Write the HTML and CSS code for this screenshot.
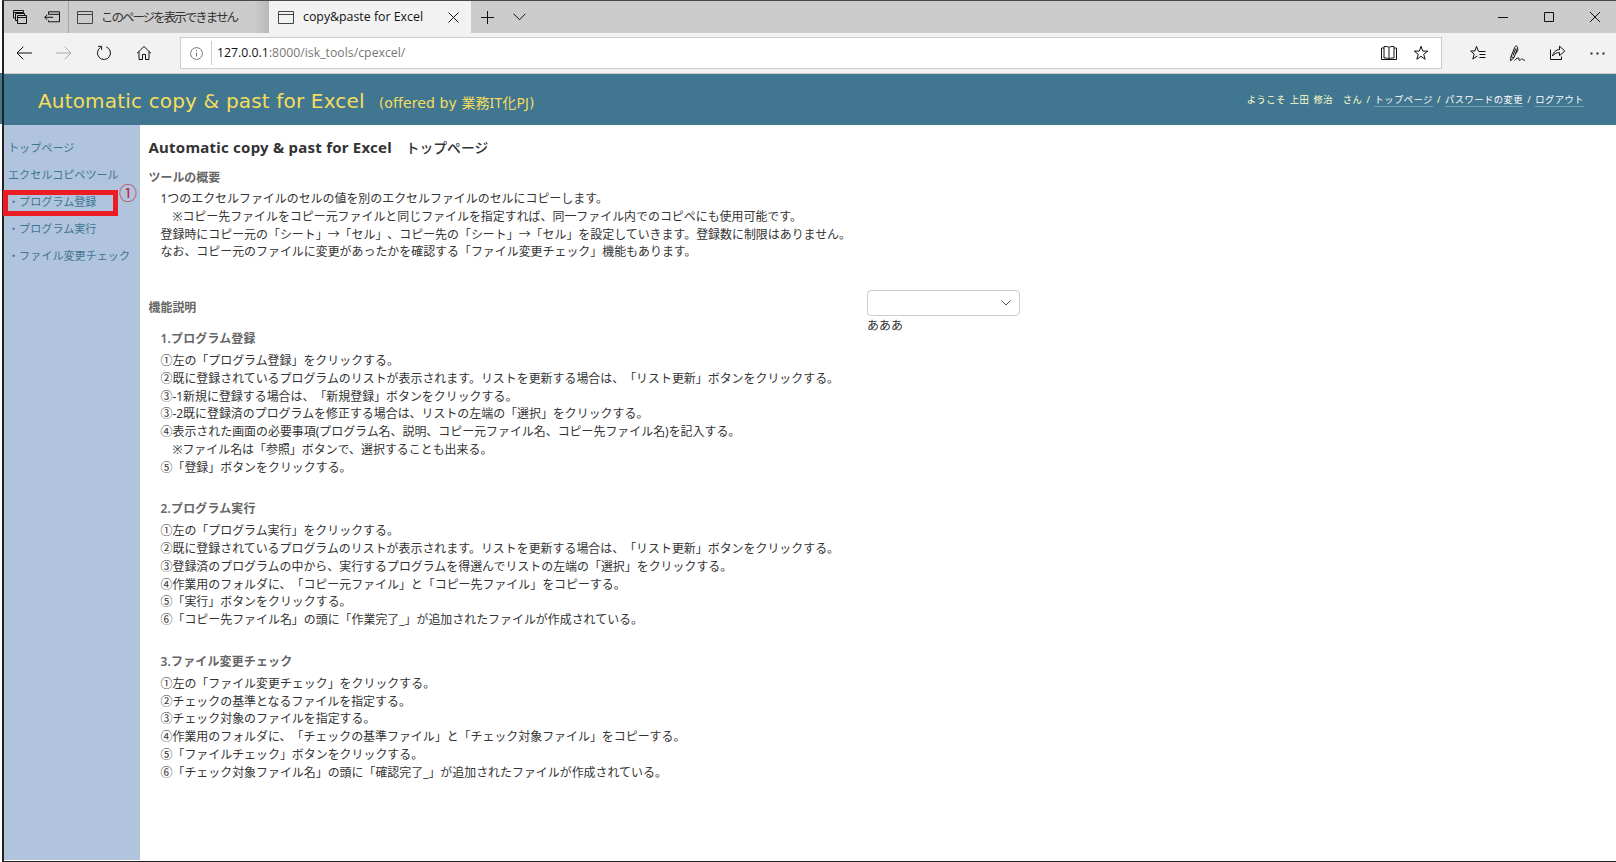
FILE: index.html
```
<!DOCTYPE html>
<html lang="ja">
<head>
<meta charset="utf-8">
<title>copy&amp;paste for Excel</title>
<link rel="stylesheet" href="styles.css">
</head>
<body>
<div class="desktop">
<div class="window">
  <div class="tabbar">
    <div class="tabtools">
      <svg width="14" height="14" viewBox="0 0 14 14"><path d="M10.500 2.500V.5H.5v7.500h2M.5 2.500h10M4.500 13.500V5.500h9v8zM4.500 7.500h9M2.500 10.500V3.500h9v2M2.500 10.500h2" /></svg>
      <svg width="16" height="12" viewBox="0 0 16 12"><path d="M4.500 3.500V.8h11v10h-11V9.300M4.500 3.300h11M.7 6.300h8.500M3.300 3.800L.7 6.300l2.600 2.500" /></svg>
    </div>
    <div class="tab tab-idle">
      <svg class="page" width="16" height="13" viewBox="0 0 16 13"><path d="M.5.5h15v12H.5zM.5 3.500h15"/></svg>
      <span class="idle-title">このページを表示できません</span>
    </div>
    <div class="tab tab-active">
      <svg class="page" width="16" height="13" viewBox="0 0 16 13"><path d="M.5.5h15v12H.5zM.5 3.500h15"/></svg>
      <span class="active-title">copy&amp;paste for Excel</span>
      <svg class="close" width="11" height="11" viewBox="0 0 11 11"><path d="M.5.5l10 10M10.500.5l-10 10"/></svg>
    </div>
    <svg class="plus" width="13" height="13" viewBox="0 0 13 13"><path d="M6.500 0v13M0 6.500h13"/></svg>
    <svg class="chev" width="13" height="8" viewBox="0 0 13 8"><path d="M.5.7l6 6 6-6"/></svg>
    <div class="winbuttons">
      <svg width="10" height="10" viewBox="0 0 10 10"><path d="M0 5.500h10"/></svg>
      <svg width="10" height="10" viewBox="0 0 10 10"><path d="M.5.5h9v9h-9z"/></svg>
      <svg width="10" height="10" viewBox="0 0 10 10"><path d="M0 0l10 10M10 0L0 10"/></svg>
    </div>
  </div>

  <div class="toolbar">
    <div class="nav">
      <svg width="16" height="14" viewBox="0 0 16 14"><path d="M1 7h15M7.300.7L1 7l6.300 6.300"/></svg>
      <svg class="faded" width="16" height="14" viewBox="0 0 16 14"><path d="M15 7H0M8.700.7L15 7l-6.300 6.300"/></svg>
      <svg width="16" height="16" viewBox="0 0 16 16"><path d="M10.300 1.900A6.500 6.500 0 1 1 4.600 2.400M2 1.300h3.600v3.600"/></svg>
      <svg width="16" height="16" viewBox="0 0 16 16"><path d="M1 8.300L8 1.500l7 6.800M3 6.700v7.800h3.500V9.500h3v5H13V6.700"/></svg>
    </div>
    <div class="address">
      <svg class="info" width="13" height="13" viewBox="0 0 13 13"><circle cx="6.500" cy="6.500" r="5.900"/><path d="M6.500 5.500v4M6.500 3v1.200"/></svg>
      <div class="url"><b>127.0.0.1</b>:8000/isk_tools/cpexcel/</div>
      <svg class="book" width="16" height="14" viewBox="0 0 16 14"><path d="M8 1.500v11.500M8 1.500C7 .6 6 .5 3 .5v11.500c3 0 4 .1 5 1 1-.9 2-1 5-1V.5C10 .5 9 .6 8 1.500M3 2H.5v11.500h15V2H13"/></svg>
      <svg width="16" height="16" viewBox="0 0 16 16"><path d="M8 1.300l1.700 4.800h5.100l-4.100 3.200 1.500 5L8 11.300l-4.200 3 1.500-5-4.100-3.200h5.100z"/></svg>
    </div>
    <div class="actions">
      <svg width="16" height="16" viewBox="0 0 16 16"><path d="M8.500 6.500h7M9.500 9.500h6M9.500 12.500h6M8.300 6L6.500 1.300 4.900 6H.7l3.500 3.100-1.400 5L7.300 11"/></svg>
      <svg width="17" height="17" viewBox="0 0 17 17"><path d="M1.500 15.800L2 11.500 5.800 2.200C6.700.2 9.100.8 8.500 3.200L4.900 12.800 1.500 15.800M2 11.500l2.900 1.300M6.700 3.500L4 10.500M8.500 3.200c1.100 1.500-.3 3-1.400 5.300M5.500 15.600c2-2.300 4.200-3.600 4.500-2.300.2 1.200-.6 2 .4 2 1.300 0 1.700-1.600 2.800-1.400.9.300.8 1.600 2.800 1.300"/></svg>
      <svg width="17" height="16" viewBox="0 0 17 16"><path d="M1.500 4.500v10h11v-3M3.500 11C4.300 7 7 4.700 10.500 4.500v-3.300L15.800 6l-5.300 4.700V7.600C7.700 7.600 5.500 8.500 3.500 11z"/></svg>
      <svg class="dots" width="15" height="3" viewBox="0 0 15 3"><path d="M.5.500h2v2h-2zM6.500.500h2v2h-2zM12.500.500h2v2h-2z"/></svg>
    </div>
  </div>

  <header class="header">
    <h1>Automatic copy &amp; past for Excel</h1>
    <span class="offered">(offered by <span class="jp">業務IT化PJ</span>)</span>
    <div class="user">ようこそ 上田 修治　さん / <a>トップページ</a> / <a>パスワードの変更</a> / <a>ログアウト</a></div>
  </header>

  <div class="page-body">
    <nav class="side">
      <a>トップページ</a>
      <a>エクセルコピペツール</a>
      <a class="marked">・プログラム登録<span class="mark"></span><span class="num">①</span></a>
      <a>・プログラム実行</a>
      <a>・ファイル変更チェック</a>
    </nav>
    <main class="content">
      <h2><span class="h2-latin">Automatic copy &amp; past for Excel</span>　トップページ</h2>
      <h3>ツールの概要</h3>
      <p class="intro">1つのエクセルファイルのセルの値を別のエクセルファイルのセルにコピーします。<br>　※コピー先ファイルをコピー元ファイルと同じファイルを指定すれば、同一ファイル内でのコピペにも使用可能です。<br>登録時にコピー元の「シート」→「セル」、コピー先の「シート」→「セル」を設定していきます。登録数に制限はありません。<br>なお、コピー元のファイルに変更があったかを確認する「ファイル変更チェック」機能もあります。</p>
      <div class="columns">
        <div class="guide">
          <h3>機能説明</h3>
          <h4>1.プログラム登録</h4>
          <p>①左の「プログラム登録」をクリックする。<br>②既に登録されているプログラムのリストが表示されます。リストを更新する場合は、「リスト更新」ボタンをクリックする。<br>③-1新規に登録する場合は、「新規登録」ボタンをクリックする。<br>③-2既に登録済のプログラムを修正する場合は、リストの左端の「選択」をクリックする。<br>④表示された画面の必要事項(プログラム名、説明、コピー元ファイル名、コピー先ファイル名)を記入する。<br>　※ファイル名は「参照」ボタンで、選択することも出来る。<br>⑤「登録」ボタンをクリックする。</p>
          <h4>2.プログラム実行</h4>
          <p>①左の「プログラム実行」をクリックする。<br>②既に登録されているプログラムのリストが表示されます。リストを更新する場合は、「リスト更新」ボタンをクリックする。<br>③登録済のプログラムの中から、実行するプログラムを得選んでリストの左端の「選択」をクリックする。<br>④作業用のフォルダに、「コピー元ファイル」と「コピー先ファイル」をコピーする。<br>⑤「実行」ボタンをクリックする。<br>⑥「コピー先ファイル名」の頭に「作業完了_」が追加されたファイルが作成されている。</p>
          <h4>3.ファイル変更チェック</h4>
          <p>①左の「ファイル変更チェック」をクリックする。<br>②チェックの基準となるファイルを指定する。<br>③チェック対象のファイルを指定する。<br>④作業用のフォルダに、「チェックの基準ファイル」と「チェック対象ファイル」をコピーする。<br>⑤「ファイルチェック」ボタンをクリックする。<br>⑥「チェック対象ファイル名」の頭に「確認完了_」が追加されたファイルが作成されている。</p>
        </div>
        <div class="picker">
          <div class="select"><svg width="10" height="6" viewBox="0 0 10 6"><path d="M.5.5L5 5 9.500.5"/></svg></div>
          <div class="picked">あああ</div>
        </div>
      </div>
    </main>
  </div>
</div>
</div>
</body>
</html>
```
FILE: styles.css
```
* { box-sizing: border-box; }
body {
  margin: 0;
  width: 1616px;
  height: 862px;
  overflow: hidden;
  background: #fff;
  color: #333;
  font-family: "Noto Sans", "Noto Sans CJK JP", sans-serif;
  text-spacing-trim: space-all;
}
h1, h2, h3, h4, p { margin: 0; }
svg { display: block; flex: none; fill: none; stroke: #111; stroke-width: 1; }

.desktop {
  height: 862px;
  padding-left: 2px;
  background: linear-gradient(#fff 73px, #417690 73px, #417690 124px, #fff 124px);
}
.window {
  height: 862px;
  border: 1px solid #222;
  border-top-color: #4a484b;
  border-left-width: 2px;
  border-right: 0;
  background: #fff;
}

.tabbar { display: flex; align-items: center; height: 32px; background: #ccc; }
.tabtools {
  display: flex;
  align-items: center;
  gap: 17px;
  width: 65px;
  height: 32px;
  padding-left: 9px;
  border-right: 1px solid #a5a5a5;
}
.tab { display: flex; align-items: center; height: 32px; }
.tab .page { stroke: #444; }
.tab-idle { width: 200px; padding-left: 8px; background: linear-gradient(90deg, #ccc 185px, #b9b9b9); }
.idle-title { margin-left: 8px; padding-bottom: 2px; font-size: 12.500px; letter-spacing: -2px; color: #333; white-space: nowrap; font-family: "Noto Sans CJK JP", sans-serif; }
.tab-active { width: 202px; padding-left: 9px; background: #f2f2f2; }
.active-title { width: 145px; margin-left: 9px; padding-bottom: 1px; font: 12.350px "Open Sans", sans-serif; color: #111; white-space: nowrap; }
.plus { margin-left: 10px; }
.chev { margin-left: 19px; }
.winbuttons { display: flex; gap: 36px; margin-left: auto; margin-right: 16px; }

.toolbar { display: flex; align-items: center; height: 41px; background: #f2f2f2; border-bottom: 1px solid #ccc; }
.nav { display: flex; align-items: center; gap: 24px; width: 176px; padding-left: 12px; }
.faded { stroke: #aaa; }
.address { display: flex; align-items: center; width: 1262px; height: 32px; padding: 0 12px 0 9px; border: 1px solid #ccc; background: #fff; }
.info { stroke: #777; stroke-width: 1; }
.url { flex: 1; height: 24px; margin-left: 8px; padding-left: 5px; border-left: 1px solid #ccc; font: 12.300px/24px "Open Sans", sans-serif; letter-spacing: 0; color: #777; }
.url b { font-weight: 400; color: #111; }
.book { margin-right: 16px; }
.actions { display: flex; align-items: center; gap: 23px; margin-left: 28px; }
.dots { fill: #222; stroke: none; margin-left: 1px; }

.header { display: flex; align-items: baseline; height: 51px; padding: 0 32px 0 34px; background: #417690; color: #f5dd5d; }
.header h1 { font: 20px/54px "DejaVu Sans", sans-serif; letter-spacing: .17px; white-space: nowrap; }
.offered { margin-left: 14px; font: 14px/54px "DejaVu Sans", sans-serif; letter-spacing: .1px; white-space: nowrap; }
.jp { font-family: "Noto Sans", "Noto Sans CJK JP", sans-serif; }
.user { align-self: center; margin-left: auto; padding-top: 2px; font-size: 9.300px; line-height: 12px; letter-spacing: .45px; word-spacing: 1.300px; color: #ffc; white-space: nowrap; }
.user a { color: #fff; border-bottom: 1px solid #79a0b3; display: inline-block; }

.page-body { display: flex; height: 736px; }
.side { width: 136px; height: 735px; padding: 9px 0 0 4px; background: #b0c4de; }
.side a { display: block; height: 27px; font-size: 11.100px; line-height: 27px; color: #417690; white-space: nowrap; }
.marked { position: relative; }
.mark { position: absolute; left: -5px; top: 2px; width: 115px; height: 26px; border: 5px solid #ec1c24; }
.num { position: absolute; left: 111px; top: -8px; font-size: 18px; line-height: 24px; color: #c0233a; font-family: "Noto Sans CJK JP", sans-serif; }

.content { flex: 1; padding: 12px 0 0 8.500px; font-size: 11.950px; line-height: 17.750px; }
.content h2 { font-size: 13.800px; line-height: 20px; font-weight: 500; }
.h2-latin { font-size: 15px; font-weight: 700; letter-spacing: .23px; }
.content h3, .content h4 { font-size: 11.950px; line-height: 18px; color: #666; font-weight: 600; }
.content > h3 { margin-top: 11px; }
.content p { margin-left: 12px; white-space: nowrap; }
.intro { margin-top: 3px; }
.columns { display: flex; margin-top: 29px; }
.guide { width: 718.500px; padding-top: 9px; }
.guide h4 { margin: 24px 0 4px 12px; letter-spacing: .2px; }
.guide h3 + h4 { margin-top: 13px; }
.select { display: flex; align-items: center; justify-content: flex-end; width: 153px; height: 26px; padding-right: 8px; border: 1px solid #ccc; border-radius: 4px; }
.select svg { stroke: #555; stroke-width: 1; }
.picked { padding-top: 1px; line-height: 18px; }
```
